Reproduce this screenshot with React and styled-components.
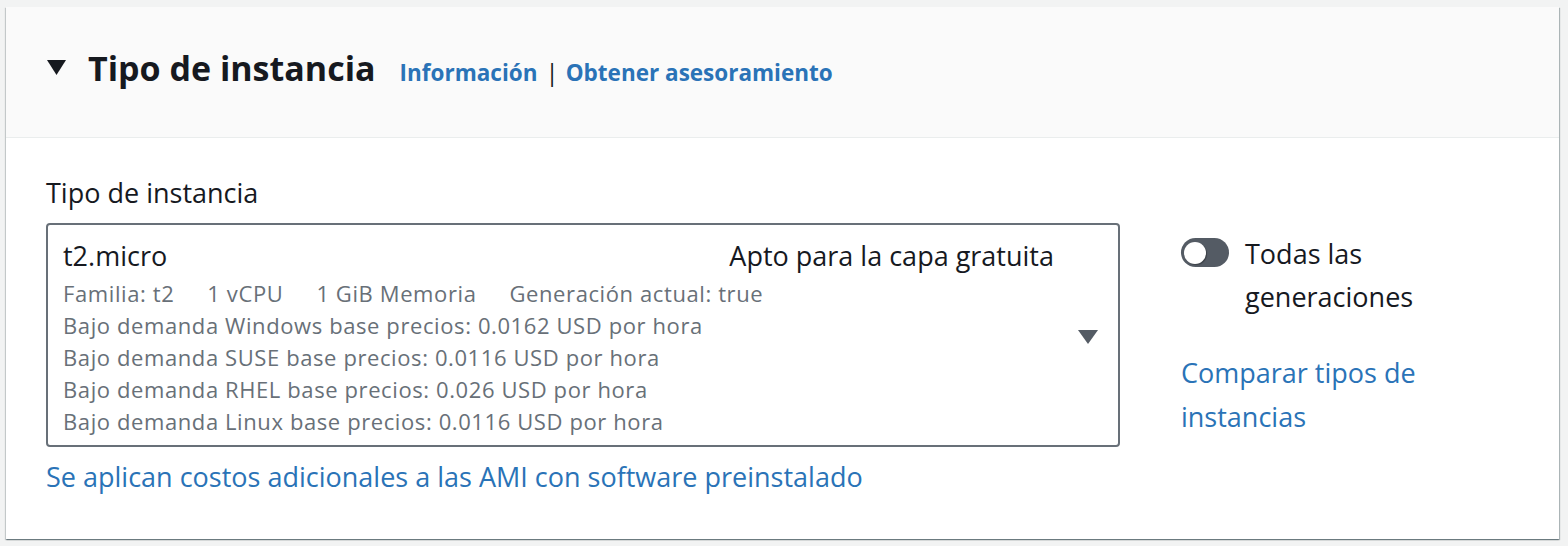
import React from 'react';
import styled, { createGlobalStyle } from 'styled-components';

const Global = createGlobalStyle`
  html, body { margin: 0; padding: 0; background: #f2f3f3; }
  body { font-family: "Open Sans", "Noto Sans", sans-serif; color: #16191f; }
  * { box-sizing: border-box; }
`;

const Page = styled.div`
  padding: 7px 9px 7px 6px;
  height: 546px;
`;

const Card = styled.section`
  background: #fff;
  height: 532px;
  box-shadow: 0 1px 1px 0 rgba(0, 28, 36, 0.3), 1px 1px 1px 0 rgba(0, 28, 36, 0.25),
    -1px 1px 1px 0 rgba(0, 28, 36, 0.15);
`;

const Header = styled.header`
  height: 131px;
  background: #fafafa;
  border-bottom: 1px solid #eaeded;
  display: flex;
  align-items: center;
  padding: 0 40px 9px 41px;
`;

const Caret = styled.svg`
  width: 19px;
  height: 15px;
  margin-right: 22px;
  flex: none;
`;

const Title = styled.h2`
  margin: 0 24px 0 0;
  font-size: 34px;
  line-height: 44px;
  font-weight: 700;
  color: #16191f;
`;

const HeaderLink = styled.a`
  font-size: 22.5px;
  font-weight: 700;
  color: #2a73b7;
  text-decoration: none;
  line-height: 30px;
  margin-top: 11px;
`;

const Divider = styled.span`
  font-size: 24px;
  line-height: 30px;
  margin: 9px 7px 0 8px;
  color: #16191f;
`;

const Body = styled.div`
  display: flex;
  align-items: flex-start;
  gap: 61px;
  padding: 39px 40px 0 40px;
`;

const LeftCol = styled.div`
  width: 1074px;
  flex: none;
`;

const Label = styled.div`
  font-size: 27px;
  line-height: 32px;
  margin-bottom: 14px;
`;

const Select = styled.div`
  border: 2px solid #687078;
  border-radius: 4px;
  padding: 12px 20px 8px 15px;
  display: flex;
  align-items: center;
`;

const SelectContent = styled.div`
  flex: 1;
  margin-right: 24px;
`;

const TopRow = styled.div`
  display: flex;
  justify-content: space-between;
  align-items: center;
  height: 36px;
  margin-bottom: 4px;
  font-size: 27px;
`;

const Meta = styled.div`
  display: flex;
  gap: ${(p) => p.$gap || 0}px;
  font-size: 22px;
  letter-spacing: 0.6px;
  line-height: 32px;
  color: #687078;
  white-space: nowrap;
`;

const Arrow = styled.svg`
  width: 20px;
  height: 14px;
  flex: none;
`;

const Link = styled.a`
  display: block;
  font-size: 27px;
  line-height: ${(p) => p.$lh || 32}px;
  color: #2a73b7;
  text-decoration: none;
  margin-top: ${(p) => p.$mt || 0}px;
`;

const RightCol = styled.div`
  width: 290px;
  margin-top: 55px;
`;

const ToggleRow = styled.div`
  display: flex;
  align-items: flex-start;
  gap: 16px;
`;

const Toggle = styled.span`
  position: relative;
  flex: none;
  width: 48px;
  height: 29px;
  border-radius: 15px;
  background: #545b64;
  margin-top: 6px;
  &::after {
    content: '';
    position: absolute;
    left: 3px;
    top: 3.5px;
    width: 22px;
    height: 22px;
    border-radius: 50%;
    background: #fff;
    box-shadow: 1px 1px 1px rgba(0, 0, 0, 0.3);
  }
`;

const ToggleLabel = styled.span`
  font-size: 27px;
  line-height: 43px;
`;

export default function App() {
  return (
    <>
      <Global />
      <Page>
        <Card>
          <Header>
            <Caret viewBox="0 0 19 15">
              <polygon points="0,0 19,0 9.5,15" fill="#16191f" />
            </Caret>
            <Title>Tipo de instancia</Title>
            <HeaderLink href="#">Información</HeaderLink>
            <Divider>|</Divider>
            <HeaderLink href="#">Obtener asesoramiento</HeaderLink>
          </Header>
          <Body>
            <LeftCol>
              <Label>Tipo de instancia</Label>
              <Select>
                <SelectContent>
                  <TopRow>
                    <span>t2.micro</span>
                    <span>Apto para la capa gratuita</span>
                  </TopRow>
                  <Meta $gap={33}>
                    <span>Familia: t2</span>
                    <span>1 vCPU</span>
                    <span>1 GiB Memoria</span>
                    <span>Generación actual: true</span>
                  </Meta>
                  <Meta>Bajo demanda Windows base precios: 0.0162 USD por hora</Meta>
                  <Meta>Bajo demanda SUSE base precios: 0.0116 USD por hora</Meta>
                  <Meta>Bajo demanda RHEL base precios: 0.026 USD por hora</Meta>
                  <Meta>Bajo demanda Linux base precios: 0.0116 USD por hora</Meta>
                </SelectContent>
                <Arrow viewBox="0 0 20 14">
                  <polygon points="0,0 20,0 10,14" fill="#545b64" />
                </Arrow>
              </Select>
              <Link href="#" $mt={14}>
                Se aplican costos adicionales a las AMI con software preinstalado
              </Link>
            </LeftCol>
            <RightCol>
              <ToggleRow>
                <Toggle />
                <ToggleLabel>Todas las generaciones</ToggleLabel>
              </ToggleRow>
              <Link href="#" $mt={33} $lh={44}>
                Comparar tipos de instancias
              </Link>
            </RightCol>
          </Body>
        </Card>
      </Page>
    </>
  );
}
